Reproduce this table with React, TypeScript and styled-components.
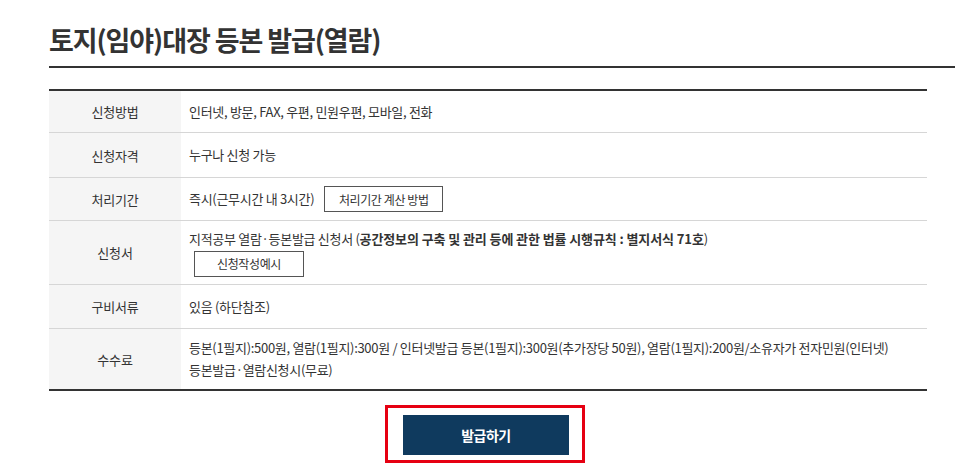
import React from 'react';
import styled, { createGlobalStyle } from 'styled-components';

const GlobalStyle = createGlobalStyle`
  html, body {
    margin: 0;
    padding: 0;
    background: #fff;
  }
  body {
    font-family: "Noto Sans CJK KR", "Noto Sans", sans-serif;
    color: #333;
  }
`;

const Page = styled.div`
  padding-left: 49px;
`;

const TitleBar = styled.div`
  height: 68px;
  border-bottom: 2px solid #333;
  box-sizing: border-box;
  padding-top: 21px;
`;

const Title = styled.h2`
  margin: 0;
  font-size: 27px;
  font-weight: 700;
  letter-spacing: -1.1px;
  line-height: 38px;
  color: #333;
`;

const Table = styled.div`
  width: 878px;
  margin-top: 21px;
  border-top: 2px solid #333;
  border-bottom: 2px solid #333;
`;

const TableRow = styled.div<{ $height: number }>`
  display: grid;
  grid-template-columns: 132px 1fr;
  min-height: ${(p) => p.$height}px;
  border-top: 1px solid #d6d6d6;
  box-sizing: border-box;

  &:first-child {
    border-top: none;
  }
`;

const Label = styled.div`
  background: #f5f5f5;
  display: flex;
  align-items: center;
  justify-content: center;
  font-size: 13px;
  letter-spacing: -0.2px;
  color: #333;
`;

const Cell = styled.div`
  display: flex;
  flex-direction: column;
  justify-content: center;
  gap: 2px;
  padding: 0 8px;
  font-size: 13px;
  letter-spacing: -0.3px;
  line-height: 20px;
  color: #333;

  strong {
    font-weight: 700;
    letter-spacing: -0.1px;
  }
`;

const Inline = styled.div`
  display: flex;
  align-items: center;
  gap: 10px;
`;

const LineButton = styled.button<{ $wide?: boolean }>`
  align-self: flex-start;
  height: 26px;
  width: ${(p) => (p.$wide ? '110px' : '119px')};
  margin-left: ${(p) => (p.$wide ? '5px' : '0')};
  border: 1px solid #555;
  background: #fff;
  font-family: inherit;
  font-size: 12px;
  letter-spacing: -0.4px;
  color: #333;
  padding: 0;
`;

const Actions = styled.div`
  width: 878px;
  display: flex;
  justify-content: center;
  padding-top: 14px;
`;

const Highlight = styled.div`
  border: 3px solid #e60012;
  padding: 7px 13px 5px 15px;
  margin-right: 6px;
`;

const IssueButton = styled.button`
  width: 166px;
  height: 40px;
  border: none;
  background: #0f3a5e;
  color: #fff;
  font-family: inherit;
  font-size: 14px;
  font-weight: 700;
  letter-spacing: -0.5px;
`;

type Row = {
  label: string;
  height: number;
  content: React.ReactNode;
};

const rows: Row[] = [
  { label: '신청방법', height: 41, content: '인터넷, 방문, FAX, 우편, 민원우편, 모바일, 전화' },
  { label: '신청자격', height: 45, content: '누구나 신청 가능' },
  {
    label: '처리기간',
    height: 43,
    content: (
      <Inline>
        즉시(근무시간 내 3시간)
        <LineButton>처리기간 계산 방법</LineButton>
      </Inline>
    ),
  },
  {
    label: '신청서',
    height: 64,
    content: (
      <>
        <div>
          지적공부 열람·등본발급 신청서 (
          <strong>공간정보의 구축 및 관리 등에 관한 법률 시행규칙 : 별지서식 71호</strong>)
        </div>
        <LineButton $wide>신청작성예시</LineButton>
      </>
    ),
  },
  { label: '구비서류', height: 44, content: '있음 (하단참조)' },
  {
    label: '수수료',
    height: 61,
    content: (
      <>
        <div>
          등본(1필지):500원, 열람(1필지):300원 / 인터넷발급 등본(1필지):300원(추가장당 50원), 열람(1필지):200원/소유자가 전자민원(인터넷)
        </div>
        <div>등본발급·열람신청시(무료)</div>
      </>
    ),
  },
];

export default function App() {
  return (
    <>
      <GlobalStyle />
      <Page>
        <TitleBar>
          <Title>토지(임야)대장 등본 발급(열람)</Title>
        </TitleBar>
        <Table>
          {rows.map((row) => (
            <TableRow key={row.label} $height={row.height}>
              <Label>{row.label}</Label>
              <Cell>{row.content}</Cell>
            </TableRow>
          ))}
        </Table>
        <Actions>
          <Highlight>
            <IssueButton>발급하기</IssueButton>
          </Highlight>
        </Actions>
      </Page>
    </>
  );
}
